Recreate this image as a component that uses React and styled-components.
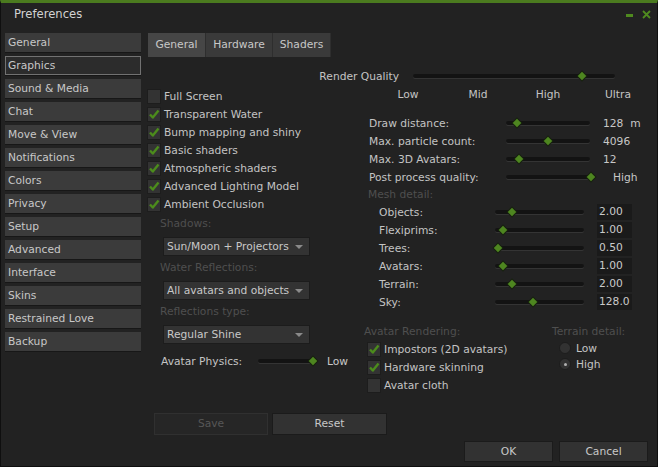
import React from "react";
import styled, { createGlobalStyle } from "styled-components";

const GlobalStyle = createGlobalStyle`
  html, body { margin: 0; padding: 0; background: #222222; }
  body {
    font-family: "DejaVu Sans", "Noto Sans", sans-serif;
    font-size: 10.7px;
    color: #c4c4c4;
  }
  * { box-sizing: border-box; }
`;

const Window = styled.div`
  width: 658px;
  height: 467px;
  background: #222222;
  border-top: 3px solid #4b7b1f;
  border-left: 1px solid #0f0f0f;
  border-right: 1px solid #0f0f0f;
  border-bottom: 1px solid #0f0f0f;
  display: flex;
  flex-direction: column;
`;

const TitleBar = styled.div`
  height: 30px;
  flex: 0 0 auto;
  display: flex;
  align-items: flex-start;
  justify-content: space-between;
  padding: 3px 6px 0 13px;
`;

const Title = styled.div`
  font-size: 11.6px;
  line-height: 16px;
  color: #d2d2d2;
`;

const Controls = styled.div`
  display: flex;
  align-items: flex-start;
  gap: 9px;
  padding-top: 4px;
`;

const MinimizeBar = styled.div`
  width: 7px;
  height: 3px;
  margin-top: 4px;
  background: #4f8a1f;
`;

const Main = styled.div`
  flex: 0 0 auto;
  display: flex;
  padding-left: 4px;
`;

const Nav = styled.div`
  width: 136px;
  display: flex;
  flex-direction: column;
  gap: 4px;
`;

const NavItem = styled.div`
  height: 19px;
  line-height: ${(p) => (p.$active ? "17px" : "19px")};
  padding-left: ${(p) => (p.$active ? "2px" : "3px")};
  background: ${(p) => (p.$active ? "#2c2c2c" : "#3b3b3b")};
  border: ${(p) => (p.$active ? "1px solid #727272" : "none")};
  box-shadow: 0 1px 0 #171717;
  color: #c8c8c8;
  white-space: nowrap;
`;

const Content = styled.div`
  margin-left: 6px;
  width: 503px;
  display: flex;
  flex-direction: column;
`;

const Tabs = styled.div`
  display: flex;
  height: 24px;
  margin-left: 1px;
`;

const Tab = styled.div`
  width: ${(p) => p.$w}px;
  height: 24px;
  line-height: 24px;
  text-align: center;
  background: ${(p) => (p.$active ? "#464646" : "#3a3a3a")};
  border-right: 1px solid #2e2e2e;
  color: #c8c8c8;
`;

const Panel = styled.div`
  padding-top: 11px;
  display: flex;
  flex-direction: column;
`;

const QualityRow = styled.div`
  height: 16px;
  display: flex;
  align-items: center;
`;

const QualityLabel = styled.div`
  width: 252px;
  text-align: right;
  margin-right: 14px;
`;

const Columns = styled.div`
  margin-top: 3px;
  display: grid;
  grid-template-columns: 217px 1fr;
`;

const Column = styled.div`
  display: flex;
  flex-direction: column;
`;

const CheckRow = styled.div`
  height: 18px;
  display: flex;
  align-items: center;
  gap: 3px;
  padding-left: ${(p) => p.$indent || 0}px;
`;

const Box = styled.div`
  width: 14px;
  height: 15px;
  background: #333333;
  border: 1px solid #1d1d1d;
  display: flex;
  align-items: center;
  justify-content: center;
`;

const DimLabel = styled.div`
  height: 16px;
  line-height: 16px;
  margin-top: ${(p) => p.$mt || 0}px;
  padding-left: ${(p) => p.$indent || 0}px;
  color: #4f4f4f;
  white-space: nowrap;
`;

const Dropdown = styled.div`
  margin-top: 5px;
  margin-left: 16px;
  width: 147px;
  height: 19px;
  background: #333333;
  border: 1px solid #1c1c1c;
  display: flex;
  align-items: center;
  justify-content: space-between;
  padding: 0 6px 0 3px;
  color: #c8c8c8;
  white-space: nowrap;
`;

const Arrow = styled.div`
  width: 0;
  height: 0;
  border-left: 4px solid transparent;
  border-right: 4px solid transparent;
  border-top: 4px solid #8a8a8a;
`;

const PhysicsRow = styled.div`
  margin-top: 9px;
  height: 16px;
  display: flex;
  align-items: center;
  padding-left: 14px;
`;

const FixedLabel = styled.div`
  width: ${(p) => p.$w}px;
  flex: 0 0 auto;
  white-space: nowrap;
`;

const Track = styled.div`
  position: relative;
  width: ${(p) => p.$w}px;
  height: 4px;
  flex: 0 0 auto;
  background: #131313;
  border-radius: 2px;
  box-shadow: 0 1px 0 #343434;
`;

const Thumb = styled.div`
  position: absolute;
  top: -1px;
  width: 6px;
  height: 6px;
  margin-left: -3px;
  background: #4e8620;
  transform: rotate(45deg);
  box-shadow: 0 0 0 1px #17200f;
`;

const Value = styled.div`
  margin-left: ${(p) => p.$ml}px;
  white-space: pre;
  color: #c8c8c8;
`;

const TickRow = styled.div`
  height: 16px;
  display: flex;
  padding-left: 9px;
`;

const Tick = styled.div`
  width: 70px;
  text-align: center;
  line-height: 16px;
`;

const SliderBlock = styled.div`
  margin-top: ${(p) => p.$mt || 0}px;
  display: flex;
  flex-direction: column;
`;

const SliderRow = styled.div`
  height: 18px;
  display: flex;
  align-items: center;
  padding-left: ${(p) => p.$indent}px;
`;

const MeshLabel = styled(DimLabel)`
  height: 17px;
  line-height: 17px;
`;

const ValueBox = styled.div`
  margin-left: 13px;
  width: 35px;
  height: 16px;
  line-height: 16px;
  padding-left: 2px;
  background: #1a1a1a;
  color: #cacaca;
`;

const AvatarSection = styled.div`
  margin-top: 13px;
  display: grid;
  grid-template-columns: 188px 1fr;
`;

const RadioRow = styled.div`
  height: 16px;
  display: flex;
  align-items: center;
  gap: 5px;
  padding-left: 7px;
`;

const Radio = styled.div`
  width: 12px;
  height: 12px;
  border-radius: 50%;
  background: #323232;
  border: 1px solid #1d1d1d;
  display: flex;
  align-items: center;
  justify-content: center;
  &::after {
    content: "";
    width: 3px;
    height: 3px;
    border-radius: 50%;
    background: ${(p) => (p.$on ? "#b0b0b0" : "transparent")};
  }
`;

const SaveRow = styled.div`
  margin-top: 19px;
  padding-left: 7px;
  display: flex;
  gap: 4px;
`;

const Button = styled.div`
  width: ${(p) => p.$w}px;
  height: ${(p) => p.$h || 22}px;
  line-height: ${(p) => (p.$h || 22) - 2}px;
  text-align: center;
  background: ${(p) => (p.$disabled ? "#262626" : "#323232")};
  border: 1px solid ${(p) => (p.$disabled ? "#303030" : "#1b1b1b")};
  color: ${(p) => (p.$disabled ? "#575757" : "#c8c8c8")};
`;

const Footer = styled.div`
  margin-top: 6px;
  display: flex;
  justify-content: flex-end;
  gap: 6px;
  padding-right: 9px;
`;

const Check = () => (
  <svg width="12" height="12" viewBox="0 0 12 12">
    <path d="M2 6.5 L4.8 9.5 L10.5 2.5" fill="none" stroke="#4c8c1c" strokeWidth="2.4" strokeLinejoin="round" />
  </svg>
);

const CloseIcon = () => (
  <svg width="9" height="9" viewBox="0 0 9 9">
    <path d="M1 1 L8 8 M8 1 L1 8" stroke="#4f8a1f" strokeWidth="1.8" />
  </svg>
);

const Checkbox = ({ on, label, indent }) => (
  <CheckRow $indent={indent}>
    <Box>{on && <Check />}</Box>
    <span>{label}</span>
  </CheckRow>
);

const Slider = ({ w, pos }) => (
  <Track $w={w}>
    <Thumb style={{ left: pos }} />
  </Track>
);

const navItems = [
  "General", "Graphics", "Sound & Media", "Chat", "Move & View", "Notifications",
  "Colors", "Privacy", "Setup", "Advanced", "Interface", "Skins", "Restrained Love", "Backup",
];

const checks = [
  ["Full Screen", false],
  ["Transparent Water", true],
  ["Bump mapping and shiny", true],
  ["Basic shaders", true],
  ["Atmospheric shaders", true],
  ["Advanced Lighting Model", true],
  ["Ambient Occlusion", true],
];

const perf = [
  ["Draw distance:", 11, "128  m", 13],
  ["Max. particle count:", 42, "4096", 13],
  ["Max. 3D Avatars:", 13, "12", 13],
  ["Post process quality:", 85, "High", 23],
];

const mesh = [
  ["Objects:", 17, "2.00"],
  ["Flexiprims:", 8, "1.00"],
  ["Trees:", 3, "0.50"],
  ["Avatars:", 8, "1.00"],
  ["Terrain:", 17, "2.00"],
  ["Sky:", 38, "128.0"],
];

export default function App() {
  return (
    <>
      <GlobalStyle />
      <Window>
        <TitleBar>
          <Title>Preferences</Title>
          <Controls>
            <MinimizeBar />
            <CloseIcon />
          </Controls>
        </TitleBar>
        <Main>
          <Nav>
            {navItems.map((n) => (
              <NavItem key={n} $active={n === "Graphics"}>{n}</NavItem>
            ))}
          </Nav>
          <Content>
            <Tabs>
              <Tab $w={58} $active>General</Tab>
              <Tab $w={67}>Hardware</Tab>
              <Tab $w={58}>Shaders</Tab>
            </Tabs>
            <Panel>
              <QualityRow>
                <QualityLabel>Render Quality</QualityLabel>
                <Slider w={202} pos={169} />
              </QualityRow>
              <Columns>
                <Column>
                  {checks.map(([l, on]) => (
                    <Checkbox key={l} label={l} on={on} />
                  ))}
                  <DimLabel $mt={3} $indent={13}>Shadows:</DimLabel>
                  <Dropdown>Sun/Moon + Projectors<Arrow /></Dropdown>
                  <DimLabel $mt={4} $indent={13}>Water Reflections:</DimLabel>
                  <Dropdown>All avatars and objects<Arrow /></Dropdown>
                  <DimLabel $mt={4} $indent={13}>Reflections type:</DimLabel>
                  <Dropdown>Regular Shine<Arrow /></Dropdown>
                  <PhysicsRow>
                    <FixedLabel $w={97}>Avatar Physics:</FixedLabel>
                    <Slider w={56} pos={55} />
                    <Value $ml={13}>Low</Value>
                  </PhysicsRow>
                </Column>
                <Column>
                  <TickRow>
                    <Tick>Low</Tick>
                    <Tick>Mid</Tick>
                    <Tick>High</Tick>
                    <Tick>Ultra</Tick>
                  </TickRow>
                  <SliderBlock $mt={11}>
                    {perf.map(([l, pos, v, ml]) => (
                      <SliderRow key={l} $indent={5}>
                        <FixedLabel $w={137}>{l}</FixedLabel>
                        <Slider w={84} pos={pos} />
                        <Value $ml={ml}>{v}</Value>
                      </SliderRow>
                    ))}
                  </SliderBlock>
                  <MeshLabel $indent={4}>Mesh detail:</MeshLabel>
                  <SliderBlock>
                    {mesh.map(([l, pos, v]) => (
                      <SliderRow key={l} $indent={15}>
                        <FixedLabel $w={116}>{l}</FixedLabel>
                        <Slider w={89} pos={pos} />
                        <ValueBox>{v}</ValueBox>
                      </SliderRow>
                    ))}
                  </SliderBlock>
                  <AvatarSection>
                    <Column>
                      <DimLabel>Avatar Rendering:</DimLabel>
                      <Checkbox indent={3} on label="Impostors (2D avatars)" />
                      <Checkbox indent={3} on label="Hardware skinning" />
                      <Checkbox indent={3} label="Avatar cloth" />
                    </Column>
                    <Column>
                      <DimLabel>Terrain detail:</DimLabel>
                      <RadioRow><Radio />Low</RadioRow>
                      <RadioRow><Radio $on />High</RadioRow>
                    </Column>
                  </AvatarSection>
                </Column>
              </Columns>
            </Panel>
            <SaveRow>
              <Button $w={114} $disabled>Save</Button>
              <Button $w={115}>Reset</Button>
            </SaveRow>
          </Content>
        </Main>
        <Footer>
          <Button $w={89} $h={21}>OK</Button>
          <Button $w={89} $h={21}>Cancel</Button>
        </Footer>
      </Window>
    </>
  );
}
